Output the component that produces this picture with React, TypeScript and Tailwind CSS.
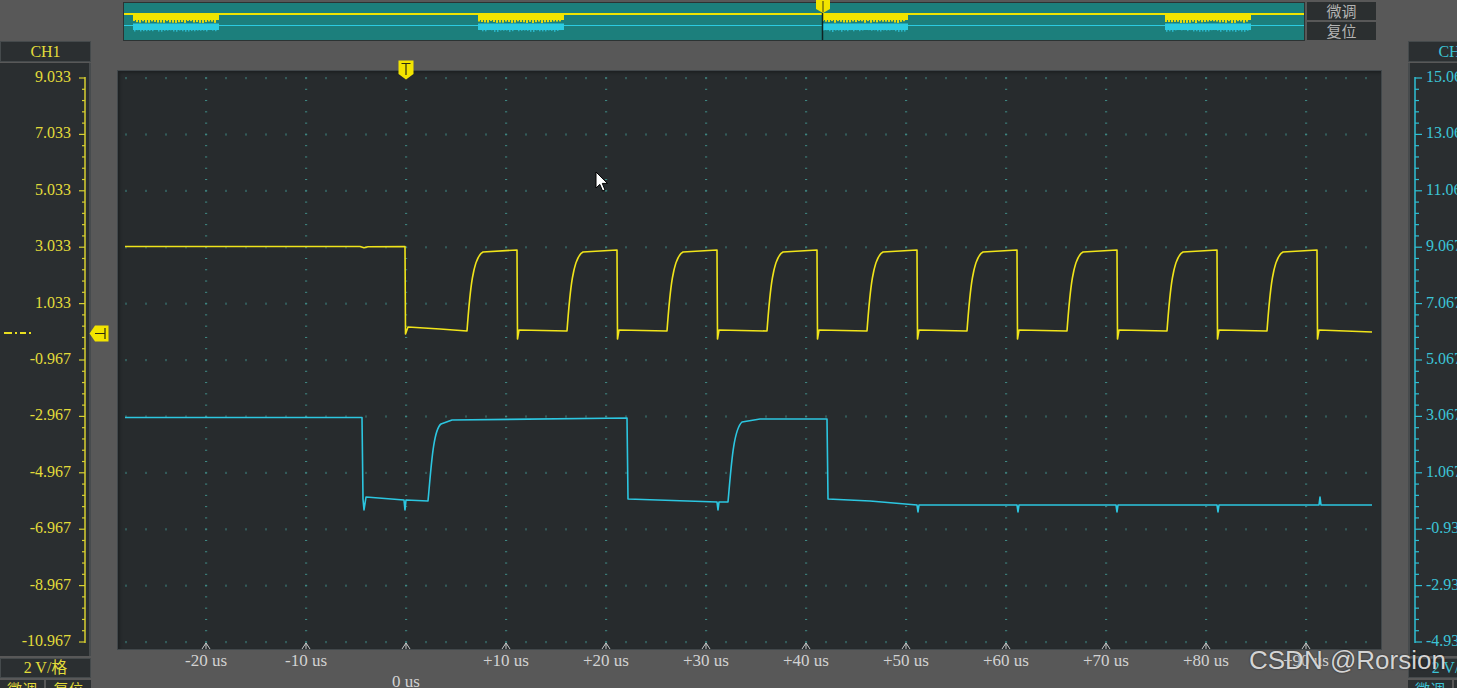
import React from 'react';

const SERIF = '"Liberation Serif", "Noto Sans CJK SC", serif';
const CJK = '"Noto Sans CJK SC", sans-serif';

const GRID_X = Array.from({ length: 12 }, (_, i) => 206 + i * 100);
const GRID_Y = Array.from({ length: 11 }, (_, j) => 78 + j * 56.4);

const LEFT_LABELS = ['9.033', '7.033', '5.033', '3.033', '1.033', '-0.967', '-2.967', '-4.967', '-6.967', '-8.967', '-10.967'];
const RIGHT_LABELS = ['15.067', '13.067', '11.067', '9.067', '7.067', '5.067', '3.067', '1.067', '-0.933', '-2.933', '-4.933'];
const TIME_LABELS = ['-20 us', '-10 us', '0 us', '+10 us', '+20 us', '+30 us', '+40 us', '+50 us', '+60 us', '+70 us', '+80 us', '+90 us'];

// tiny deterministic jitter so the bands look noisy
function jitter(i: number) {
  const s = Math.sin(i * 12.9898) * 43758.5453;
  return s - Math.floor(s);
}

function yellowPath() {
  let d = 'M125 246.5 L360 246.5 L364 247.8 L368 246.8 L405 246.5 L405.5 334 L408 327 L440 329 L467 331';
  for (let k = 0; k < 9; k++) {
    const r = 467 + k * 100;
    const f = 517 + k * 100;
    d += ` C${r + 3} 290 ${r + 6} 257 ${r + 16} 252 L${f} 250 L${f + 0.5} 339 L${f + 2} 330`;
    d += k < 8 ? ` L${f + 50} 331` : ' L1372 332';
  }
  return d;
}

function cyanPath() {
  let d = 'M125 417.5 L362 417.5 L363 499 L364 510 L366 497 L404 500 L405 510 L406 500 L428 501';
  d += ' C431 470 433 430 441 424 L452 420 L627 418 L628 499 L717 502 L718 510 L719 502 L728 502';
  d += ' C731 470 733 430 742 422 L760 419 L827 419 L828 499 L870 501';
  [918, 1018, 1117, 1218].forEach((x) => {
    d += ` L${x - 1} 505 L${x} 512 L${x + 1} 505`;
  });
  d += ' L1319 505 L1320 497 L1321 505 L1372 505';
  return d;
}

function Overview() {
  const segs = [133, 478, 822, 1165];
  return (
    <div className="relative w-[1182px] h-[39px] bg-[#1c7f7c] border border-[#2c3333]">
      <svg className="block w-full h-full" viewBox="124 3 1180 37" preserveAspectRatio="none">
        <line x1="124" y1="14" x2="1304" y2="14" stroke="#f0e400" strokeWidth="2" />
        <line x1="124" y1="25.5" x2="1304" y2="25.5" stroke="#2ccbe0" strokeWidth="1" />
        {segs.map((sx) => (
          <g key={sx}>
            <rect x={sx} y={13} width={86} height={7} fill="#f0e400" />
            <rect x={sx} y={23.5} width={86} height={6.5} fill="#2ccbe0" />
            {Array.from({ length: 28 }, (_, i) => (
              <g key={i}>
                <rect x={sx + i * 3} y={20} width={2} height={1 + jitter(sx + i) * 2} fill="#e4da10" />
                <rect x={sx + i * 3 + 1} y={30} width={1.5} height={jitter(sx * 3 + i) * 2} fill="#2ab8cc" />
              </g>
            ))}
          </g>
        ))}
        <line x1="822.5" y1="3" x2="822.5" y2="40" stroke="#0f2222" strokeWidth="1.5" />
      </svg>
      <svg className="absolute left-[691px] top-[-3px] w-[16px] h-[14px]" viewBox="0 0 16 14">
        <path d="M1 0 H15 V9 L8 13 L1 9 Z" fill="#f2e400" />
        <line x1="8" y1="1" x2="8" y2="12" stroke="#3a3a10" strokeWidth="1" />
      </svg>
    </div>
  );
}

function Plot() {
  const vDots: React.ReactNode[] = [];
  GRID_X.forEach((x) => {
    for (let k = 0; k <= 50; k++) {
      const y = 78 + k * 11.28;
      vDots.push(<rect key={`v${x}-${k}`} x={x - 1} y={y - 0.5} width={2.2} height={1} />);
    }
  });
  const hDots: React.ReactNode[] = [];
  GRID_Y.forEach((y, j) => {
    for (let i = 0; i <= 62; i++) {
      const x = 126 + i * 20;
      hDots.push(<rect key={`h${j}-${i}`} x={x - 0.5} y={y - 1} width={1} height={2.2} />);
    }
  });
  return (
    <div className="relative w-[1265px] h-[580px] bg-[#272b2d] border border-[#41474a] shadow-[inset_2px_2px_3px_rgba(0,0,0,0.25)]">
      <svg className="block w-full h-full" viewBox="118 71 1263 578" preserveAspectRatio="none">
        <g fill="#3f8a85">
          {vDots}
          {hDots}
        </g>
        <g stroke="#c9c9c9" strokeWidth="1" fill="none">
          {GRID_X.map((x) => (
            <path key={x} d={`M${x - 4} 649 L${x} 643 L${x + 4} 649 M${x} 643 V650`} />
          ))}
        </g>
        <path d={cyanPath()} stroke="#2cc6e0" strokeWidth="1.6" fill="none" strokeLinejoin="round" />
        <path d={yellowPath()} stroke="#f0e41a" strokeWidth="1.6" fill="none" strokeLinejoin="round" />
      </svg>
      {/* trigger time marker */}
      <svg className="absolute left-[280px] top-[-11px] w-[16px] h-[20px]" viewBox="0 0 16 20">
        <path d="M0.5 0.5 H15.5 V14 L8 19.5 L0.5 14 Z" fill="#f2e400" />
        <path d="M3.5 3.5 H12.5 M8 3.5 V15" stroke="#2c2c10" strokeWidth="1.2" fill="none" />
      </svg>
      {/* mouse pointer */}
      <svg className="absolute left-[477px] top-[100px] w-[14px] h-[22px]" viewBox="0 0 14 22">
        <path d="M1 1 L1 17 L4.8 13.4 L7.6 20 L10 19 L7.3 12.4 L12.5 12.4 Z" fill="#ffffff" stroke="#000000" strokeWidth="1" />
      </svg>
    </div>
  );
}

function AxisTicks({ side, color }: { side: 'left' | 'right'; color: string }) {
  const ax = side === 'left' ? 13 : 5;
  const major = side === 'left' ? 7 : 12;
  const minor = side === 'left' ? 10 : 9;
  const ticks: React.ReactNode[] = [];
  for (let k = 0; k <= 50; k++) {
    const y = 15 + k * 11.28;
    const isMajor = k % 5 === 0;
    ticks.push(
      <line key={k} x1={ax} y1={y} x2={isMajor ? major : minor} y2={y} stroke={color} strokeWidth="1.2" />,
    );
  }
  return (
    <svg className="block shrink-0" width={side === 'left' ? 17 : 14} height={593}>
      <line x1={ax} y1={14} x2={ax} y2={580} stroke={color} strokeWidth="1.5" />
      {ticks}
    </svg>
  );
}

function Labels({ items, align, color }: { items: string[]; align: 'left' | 'right'; color: string }) {
  return (
    <div
      className={`flex flex-col gap-[36.4px] pt-[4px] text-[16px] leading-[20px] ${align === 'right' ? 'w-[74px] items-end pr-[1px]' : 'pl-[2px] items-start'}`}
      style={{ color }}
    >
      {items.map((t) => (
        <span key={t} className="h-[20px] whitespace-nowrap">{t}</span>
      ))}
    </div>
  );
}

export default function App() {
  const yellowText = '#e2dc3a';
  const cyanText = '#3cc4d6';
  return (
    <div className="relative w-[1457px] h-[688px] overflow-hidden bg-[#585858]" style={{ fontFamily: SERIF }}>
      {/* top strip: overview + buttons */}
      <div className="flex h-[41px] pt-[2px]">
        <div className="w-[123px] shrink-0" />
        <Overview />
        <div className="ml-[2px] w-[69px] flex flex-col gap-[2px]" style={{ fontFamily: CJK }}>
          <div className="h-[18px] bg-[#2b2f30] text-[#b3b3b3] text-[15px] leading-[18px] text-center">微调</div>
          <div className="h-[18px] bg-[#2b2f30] text-[#b3b3b3] text-[15px] leading-[18px] text-center">复位</div>
        </div>
      </div>

      <div className="flex">
        {/* left channel */}
        <div className="relative w-[91px] shrink-0">
          <div className="h-[21px] bg-[#2b2f31] border border-[#454a4c] text-[16px] leading-[19px] text-center" style={{ color: yellowText }}>
            CH1
          </div>
          <div className="relative mt-[1px] h-[593px] flex bg-[#2a2e30] border-r-2 border-[#474b4d]">
            <Labels items={LEFT_LABELS} align="right" color={yellowText} />
            <AxisTicks side="left" color="#d8d030" />
            <svg className="absolute left-[4px] top-[269px] w-[30px] h-[2px]" viewBox="0 0 30 2">
              <path d="M0 1 H8 M11 1 H13 M16 1 H22 M25 1 H27" stroke="#e8de20" strokeWidth="2" />
            </svg>
          </div>
          <div className="mt-[2px] h-[20px] bg-[#2b2f31] border border-[#454a4c] text-[16px] leading-[18px] text-center" style={{ color: yellowText }}>
            2 V/格
          </div>
          <div className="mt-[2px] flex gap-[2px] text-[15px] leading-[18px]" style={{ color: yellowText, fontFamily: CJK }}>
            <div className="w-[44px] h-[20px] bg-[#2b2f31] text-center">微调</div>
            <div className="w-[45px] h-[20px] bg-[#2b2f31] text-center">复位</div>
          </div>
          {/* trigger level marker */}
          <svg className="absolute left-[89px] top-[284px] w-[20px] h-[17px] z-10" viewBox="0 0 20 17">
            <path d="M0.5 8.5 L6 0.5 H19.5 V16.5 H6 Z" fill="#f2e400" />
            <path d="M16 3 V14 M16 8.5 H6" stroke="#2c2c10" strokeWidth="1.2" fill="none" />
          </svg>
        </div>

        {/* plot */}
        <div className="ml-[26px] w-[1265px] shrink-0 pt-[29px]">
          <Plot />
          <div className="flex pl-[39px] text-[17px] text-[#d2d2d2] leading-[20px] pt-[1px]">
            {TIME_LABELS.map((t) => (
              <div key={t} className="w-[100px] text-center">
                <span className={t === '0 us' ? 'block mt-[21px]' : 'block'}>{t}</span>
              </div>
            ))}
          </div>
        </div>

        {/* right channel */}
        <div className="ml-[26px] w-[91px] shrink-0">
          <div className="h-[21px] bg-[#2b2f31] border border-[#454a4c] text-[16px] leading-[19px] text-center" style={{ color: cyanText }}>
            CH2
          </div>
          <div className="mt-[1px] h-[593px] flex bg-[#2a2e30] border-l-2 border-[#474b4d]">
            <AxisTicks side="right" color="#2fc0d4" />
            <Labels items={RIGHT_LABELS} align="left" color={cyanText} />
          </div>
          <div className="mt-[2px] h-[20px] bg-[#2b2f31] border border-[#454a4c] text-[16px] leading-[18px] text-center" style={{ color: cyanText }}>
            2 V/格
          </div>
          <div className="mt-[2px] flex gap-[2px] text-[15px] leading-[18px]" style={{ color: cyanText, fontFamily: CJK }}>
            <div className="w-[44px] h-[20px] bg-[#2b2f31] text-center">微调</div>
            <div className="w-[45px] h-[20px] bg-[#2b2f31] text-center">复位</div>
          </div>
        </div>
      </div>

      {/* watermark */}
      <div
        className="absolute left-[1249px] top-[644px] text-[26px] leading-[32px] text-[#d4d4d4] whitespace-nowrap [text-shadow:0_0_2px_rgba(0,0,0,0.6)]"
        style={{ fontFamily: '"Liberation Sans", Arial, sans-serif' }}
      >
        CSDN @Rorsion
      </div>
    </div>
  );
}
